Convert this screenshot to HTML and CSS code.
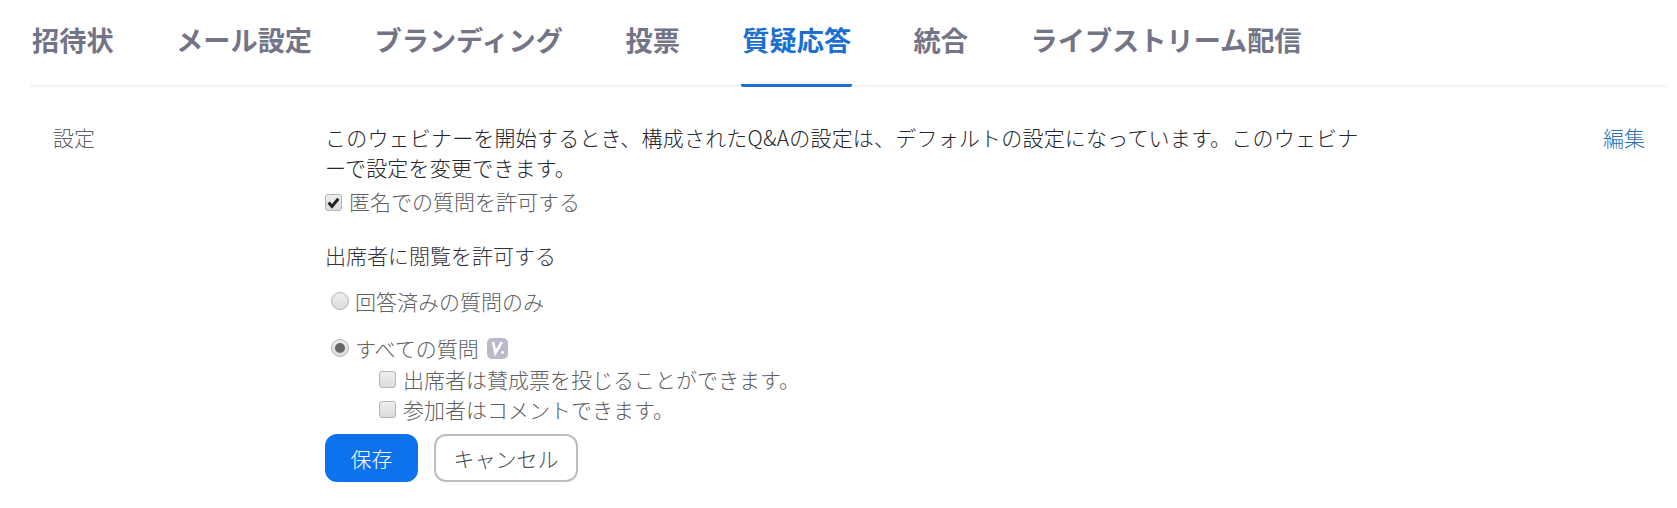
FILE: index.html
```html
<!DOCTYPE html>
<html lang="ja">
<head>
<meta charset="utf-8">
<title>質疑応答</title>
<link rel="stylesheet" href="styles.css">
</head>
<body>
<nav class="tabs">
  <a class="tab">招待状</a>
  <a class="tab">メール設定</a>
  <a class="tab">ブランディング</a>
  <a class="tab">投票</a>
  <a class="tab active">質疑応答</a>
  <a class="tab">統合</a>
  <a class="tab">ライブストリーム配信</a>
</nav>
<main class="row">
  <div class="label">設定</div>
  <div class="content">
    <p class="intro">このウェビナーを開始するとき、構成されたQ&amp;Aの設定は、デフォルトの設定になっています。このウェビナーで設定を変更できます。</p>
    <label class="check first"><span class="box checked"><svg viewBox="0 0 12 12" width="13" height="13"><path d="M1.5 6 L4.6 9.6 L10.5 2.6" fill="none" stroke="#222" stroke-width="2.8"/></svg></span>匿名での質問を許可する</label>
    <div class="subhead">出席者に閲覧を許可する</div>
    <label class="radio one"><span class="dot"></span>回答済みの質問のみ</label>
    <label class="radio two"><span class="dot on"></span>すべての質問<span class="badge"><svg viewBox="0 0 20 20" width="20" height="20"><path d="M6 4 L8.4 15 L15 4" fill="none" stroke="#fff" stroke-width="2.6"/><circle cx="15.5" cy="14.5" r="1.4" fill="#fff"/></svg></span></label>
    <div class="subchecks">
      <label class="check"><span class="box"></span>出席者は賛成票を投じることができます。</label>
      <label class="check"><span class="box"></span>参加者はコメントできます。</label>
    </div>
    <div class="actions">
      <button class="btn primary">保存</button>
      <button class="btn">キャンセル</button>
    </div>
  </div>
  <a class="edit">編集</a>
</main>
</body>
</html>
```
FILE: styles.css
```css
* { box-sizing: border-box; }
html, body { margin: 0; padding: 0; background: #fff; }
body {
  width: 1677px;
  height: 508px;
  overflow: hidden;
  font-family: "Noto Sans CJK JP", "Noto Sans", sans-serif;
  font-weight: 300;
  color: #5e6062;
  font-size: 21px;
}
.tabs {
  display: flex;
  gap: 60.5px;
  margin: 0 10px 0 30px;
  padding-left: 1px;
  height: 87px;
  border-bottom: 2px solid #f4f4f5;
}
.tab {
  display: block;
  height: 87px;
  padding: 19px 1px 0;
  font-size: 27.2px;
  line-height: 40px;
  font-weight: 700;
  color: #747487;
  white-space: nowrap;
}
.tab.active {
  color: #1a6fd0;
  border-bottom: 3px solid #1a6fd0;
  border-radius: 0 0 2px 2px;
}
.row {
  display: flex;
  padding: 35px 32px 0 53px;
}
.label { width: 272px; flex: none; line-height: 30px; }
.content { width: 1040px; flex: none; }
.intro {
  margin: 0;
  line-height: 30px;
  letter-spacing: 0.2px;
  color: #26262c;
}
.check { display: flex; align-items: center; line-height: 29.5px; }
.check.first { margin-top: 5px; height: 30px; }
.box {
  width: 17px;
  height: 17px;
  margin-right: 7px;
  border: 1px solid #b5b5b5;
  border-radius: 3px;
  background: linear-gradient(#eee, #dcdcdc);
  display: flex;
  align-items: center;
  justify-content: center;
}
.subhead { margin-top: 23px; line-height: 30px; color: #34343a; }
.radio { display: flex; align-items: center; line-height: 30px; margin-left: 6px; }
.radio.one { margin-top: 16px; }
.radio.two { margin-top: 17px; }
.dot {
  width: 18px;
  height: 18px;
  border-radius: 50%;
  border: 1px solid #b5b5b5;
  background: linear-gradient(#eee, #dcdcdc);
  margin-right: 6px;
  display: flex;
  align-items: center;
  justify-content: center;
}
.dot.on::after {
  content: "";
  width: 10px;
  height: 10px;
  border-radius: 50%;
  background: #666;
}
.badge {
  width: 21px;
  height: 21px;
  margin-left: 8px;
  border-radius: 5px;
  background: #babacb;
  display: flex;
  align-items: center;
  justify-content: center;
}
.subchecks { margin: 2px 0 0 54px; }
.actions { display: flex; gap: 16px; margin-top: 10px; }
.btn {
  height: 48px;
  width: 144px;
  border: 2px solid #bdbdc1;
  border-radius: 12px;
  background: #fff;
  color: #4a4a52;
  font: inherit;
  padding: 0;
}
.btn.primary {
  width: 93px;
  background: #0e72ed;
  border-color: #0e72ed;
  color: #fff;
}
.edit { color: #2d6fb7; line-height: 30px; margin-left: auto; }
```
